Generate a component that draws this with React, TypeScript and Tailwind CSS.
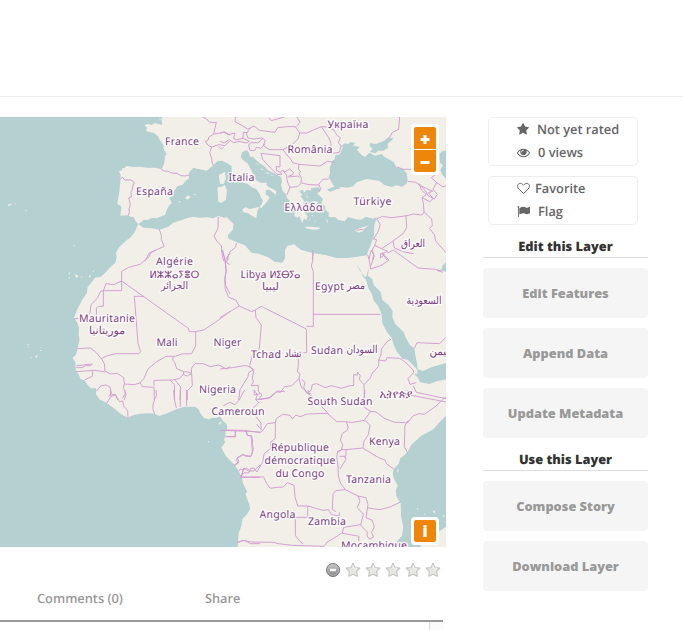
import type { ReactNode } from 'react';

const LAND = '#f2efe9';

/* Each map section is drawn at three times its displayed size. */
const SECTIONS = [
  {
    x: 0, y: 110,
    water: [
      'M0 0H480L483 20 487 45 475 42 465 39 455 45 445 42 433 46 441 53 438 63 448 66 462 69 474 79 480 91 489 102 492 120 500 132 495 137 493 158 488 172 483 177 463 173 440 173 420 170 400 171 380 168 374 174 366 175 367 181 357 183 362 195 361 215 358 245 352 281 362 287 364 294 361 317 385 316 392 321 400 320 408 335 415 342 411 350 403 368 389 384 378 392 358 410 347 430 345 453H0Z',
      'M415 342L425 335 432 329 442 330 455 324 470 325 485 318 495 315 500 300 509 284 516 280 508 265 519 248 532 229 548 224 557 212 567 206 567 188 580 173 590 176 600 178 620 182 640 166 652 154 665 152 680 160 695 168V325L655 318 640 325 620 322 600 323 580 320 565 323 545 330 520 338 505 350 478 359 455 355 430 353Z',
    ],
    land: [
      'M661 194L674 185 677 204 671 223 664 214Z',
      'M653 232L667 230 674 225 680 244 677 270 664 277 656 272Z',
      'M555 263L565 256 572 262 562 269Z M578 253L586 251 589 255Z M536 274L542 273 538 279Z',
      'M22 284L31 281 36 284 27 287Z M46 279L50 283 44 283Z M73 299L84 302 76 302Z M219 406L227 407 222 409Z M85 319L88 321Z',
      'M478 31L483 27 479 26Z',
    ],
    sea: ['M466 18L474 25 485 28 485 19Z M684 375L690 371V389L685 386Z'],
    borders: [
      'M483 177L492 183 505 184 515 189 531 190 542 197 556 198 567 195',
      'M361 207L368 202 374 210 393 210 403 217 399 226 397 238 393 247 394 261 386 264 391 283 387 297 388 307 385 316',
      'M606 20L620 27 628 36 642 38 649 37 641 72 626 82 625 90 616 94 623 105 635 111 632 120 629 128 635 145 637 160 641 166',
      'M641 72L660 69 675 66 690 76M635 111L657 104 675 107 690 92M655 110L664 117 671 112',
      'M655 321L654 355 642 378 651 394 664 408 666 431 671 453M690 431L684 438 684 450',
      'M478 358L484 376 484 389 493 409 477 416 452 428 448 439 435 452',
    ],
  },
  {
    x: 220, y: 110,
    water: [
      'M-5 152L12 155 25 161 29 181 45 202 67 217 82 221 98 233 109 237 119 252 123 263 129 271 125 283 119 291 123 295 135 282 145 270 148 261 137 254 138 241 148 239 160 248 167 255 169 244 158 237 146 231 139 225 141 218 122 218 106 209 96 185 83 160 66 148 62 140 66 127 80 120 86 126 90 140 98 140 108 149 119 160 133 168 143 180 165 191 183 201 186 215 183 225 188 243 198 253 201 264 212 275 216 286 211 292 216 304 232 302 240 308 224 307 223 318 232 323 238 318 247 340 252 325 259 331 263 318 254 308 254 298 265 303 260 292 250 285 252 271 240 257 248 257 238 243 249 239 252 248 260 239 274 242 272 235 294 232 303 238 299 246 291 250 302 260 309 267 304 278 315 288 316 301 326 307 326 321 347 322 354 330 374 334 384 321 408 328 423 329 438 320 459 326 470 321 463 348 462 375 450 411 439 435 401 442 370 444 320 435 281 429 242 419 222 403 203 407 194 421 196 440 188 456 173 456 144 441 115 431 94 428 75 406 50 397 31 388 25 374 38 360 41 342 23 325 35 311 20 315 15 324 0 319Z',
      'M326 202L330 188 329 174 337 153 344 148 345 137 360 132 369 109 361 111 374 100 384 102 392 96 405 99 400 107 419 111 411 119 424 134 435 141 448 128 465 137 485 132 494 141 521 156 529 171 548 177 560 190 563 209 560 221 546 230 529 226 515 231 493 225 479 213 439 207 410 217 399 229 384 233 365 231 345 236 340 225Z',
      'M449 126L458 117 449 108 450 99 468 102 491 93 502 85 521 83 514 92 503 101 504 113 491 122 474 122 467 130Z',
      'M320 239L339 231 365 234 350 238 331 245Z',
      'M680 122L669 122 658 133 660 158 669 166 661 179 667 195 680 207Z',
    ],
    land: [
      'M67 298L77 292 88 297 118 291 112 304 109 325 84 310 69 306Z',
      'M254 350L275 350 300 353 297 358 278 359 258 355Z',
      'M404 361L418 355 447 346 431 357 430 364 415 368Z',
      'M-4 194L8 191 16 187 16 208 9 222 0 221Z M-7 233L7 230 14 226 20 240 17 268 5 278 -5 276Z',
      'M283 272L294 276 290 283 280 280Z M296 302L306 300 303 306Z M260 257L265 260 259 263Z M276 315L280 318 275 319Z M318 325L325 335 321 338Z M283 333L287 332 287 336Z M269 326L273 330 268 332Z M257 253L262 251 260 254Z',
      'M242 283L248 286 263 296 270 304 263 302 249 293Z',
      'M110 160L120 165 109 162ZM120 174L135 181 125 179ZM135 187L151 190 141 191ZM152 195L162 196 155 197Z',
    ],
    sea: [],
    borders: [
      'M0 70L12 66 24 74 45 69 41 86 50 89 69 85 88 94 79 99 57 94 41 98 28 89 12 99 0 94',
      'M47 20L45 35 67 47 82 57 92 53 102 48 118 61 165 67 173 53 201 50 226 50 239 69 234 87 217 103 189 119 148 119 130 106 136 91 126 84 101 87 84 84 79 71 91 55M69 85L70 67 83 68M91 98L115 98 128 86M91 99L86 105 90 121 104 122 109 112 123 115 134 102M123 130L149 133 180 137 180 171 169 169 169 181 181 187 185 193 171 193 143 165 128 148 123 130M181 187L187 180 200 195 201 209 205 223 210 231 201 255M189 119L204 139 211 145 218 158 237 163 235 179 242 184 237 191 245 205 243 220 232 230 210 232M187 180L195 186 208 177 221 187 218 194 205 199M205 201L232 198 239 202M245 219L267 224 296 225 299 219 309 208 326 207M296 225L303 236 297 243M237 163L260 165 300 168 322 154 344 157M239 69L261 69 280 60 304 50 327 84 333 100 332 131 358 127 363 106 355 99 361 83 350 75 342 60 322 51 304 50M230 20L240 37 229 49M147 24L154 32 196 20',
      'M539 20L536 58 517 67 510 81 503 85M532 171L549 178 573 178M563 214L588 217 599 226M598 221L604 240 619 254 606 263 610 280 612 306 606 315 579 312 566 316 540 320 513 323 487 319 470 327M573 178L650 192 634 203 650 218 639 238 652 253 643 267 624 257 619 247 598 221M604 228L638 244 625 248 639 265M650 218L669 231 678 227M640 265L629 275 606 263M612 306L635 327 637 347 628 355 643 374 647 393 678 428M558 318L560 353 549 371 519 393 485 416 464 406 470 389 460 387 474 366 481 343 470 327M519 393L523 414 550 425 580 431M487 431L501 450M485 416L503 424 487 431M464 406L457 420 461 434 458 450',
      'M49 399L47 411 31 424 20 447M281 429L278 439 278 450',
      'M409 361L426 358 431 361',
    ],
  },
  {
    x: 0, y: 250,
    water: [
      'M0 -10H345L348 8 350 22 346 39 329 53 316 68 302 80 285 83 280 91 263 111 261 128 246 151 231 180 222 203 232 218 237 235 236 256 239 269 234 290 229 312 218 325 226 337 228 363 237 375 242 388 254 391 263 405 278 421 281 433 294 452H0Z',
    ],
    land: [
      'M207 65L210 72 206 74Z M204 83L212 82 207 86Z M226 72L236 78 229 84 226 78Z M243 79L247 79 245 84Z M266 78L273 75 269 84Z M277 66L285 58 280 66Z',
      'M80 283L88 284 85 287Z M83 290L88 291 85 294Z M121 289L124 293 123 297Z M118 300L125 300 124 304Z M108 317L112 315 111 324 105 321Z M90 322L98 322 94 324Z',
    ],
    sea: [],
    borders: [
      'M222 206L240 206M290 204L289 174 296 169 310 169 310 122 365 122 365 64 386 52 420 43 439 27 448 9 468 0M310 122L302 124 292 145 273 164 270 189 248 218M310 122L318 101 341 104 365 93 565 235 568 245 587 245 611 240 647 216 690 185M432 139H403L414 280 422 305 417 311 349 311 322 317 304 326 290 309 271 294 232 296M587 245V287L575 311 545 312 526 319 498 319 467 337 444 357 432 385 420 399 403 404 373 402 371 383 352 370 331 372 315 363 313 341 304 326M228 353L247 353 256 347 271 347 277 342 251 345 230 347M228 365L285 361 315 366M255 389L277 379 278 364M289 424L302 408 318 405 330 411 334 430 326 440M334 434L346 433 353 450M373 402L370 413 378 432 373 450M420 399L428 410 462 412 463 450M462 407V391L517 390 537 386 550 374 551 365 530 356 524 337 518 330 520 320M511 391L523 404 524 449M526 391L542 411 540 450M550 374L562 378 574 371 562 365 551 366M574 371L575 354 585 341 610 341 631 350 656 345 680 357 690 349M575 371L577 407 562 422 562 450M668 0L674 27 679 62 675 80 677 107 690 132M690 11L682 20 680 38 690 44',
    ],
  },
  {
    x: 220, y: 250,
    water: [
      'M404 21L409 43 422 61 429 81 437 87 445 114 456 133 461 152 473 166 485 191 487 219 500 245 515 263 521 284 529 302 547 326 563 329 577 343 592 360 593 370 582 373 594 383 600 397 628 402 653 393 690 386V336L636 351 609 363 593 358 591 340 587 321 583 295 569 284 556 260 551 247 525 221 517 201 518 183 505 164 487 150 482 126 461 105 457 87 444 77 447 51 440 76 436 82 421 64 409 43Z',
      'M678 37L668 46 664 61 678 66Z',
      'M115 -8L118 10 145 22 164 35 186 38 195 25V-8Z M249 0L275 8 318 15 349 24 380 24 399 21 440 16 445 -5H250Z',
    ],
    land: [],
    sea: [],
    borders: [
      'M5 0L16 30 18 65 14 94 16 119 26 142 47 150 58 168 95 185 106 180 124 169 259 237 260 308 250 308M278 0V32L274 48 280 65V229H259M280 193H482M58 168L0 203M106 180L108 203 124 225 118 295 97 316 89 347 99 360 86 368 84 380 60 419 56 450M0 357L37 353 71 347 83 348 102 360 97 384 100 396 93 407 115 406 115 424 126 434 116 449M119 449L147 444 169 425 181 427 194 410 215 407 237 386 240 371 232 365 235 347 235 309 247 308M237 386L243 410 263 429 273 421 277 404 290 401 315 413 334 407 364 415 386 408 401 406 401 374 412 375 412 366 421 377 418 388 432 404 434 449M432 404L451 384 457 369 476 349 476 330 483 315 484 297 502 274 513 268M474 330L497 333 501 323 539 325 559 339 580 361 581 368 564 386 570 403 589 398M580 408L589 427 678 446M482 10L481 24 493 15 487 7M482 10L502 24 506 31 484 46 452 57 447 27 454 0M454 0L463 19 452 48M447 27L443 14M503 9L520 0 594 54 647 58 669 67M583 295L591 278 614 279 659 281 678 262M246 388L255 398 251 412 260 429 273 431',
      'M652 60L655 64 666 59',
    ],
  },
  {
    x: 60, y: 390,
    water: [
      'M-182 0L108 -5 108 13 120 29 135 36 150 46 167 59 183 72 204 83 219 76 239 71 270 70 285 72 298 78 321 70 349 58 371 51 405 50 415 57 421 70 431 83 445 88 455 84 470 83 480 79 486 88 490 94 500 102 502 114 497 123 496 139 492 151 496 154 491 164 484 172 488 181 498 199 512 213 524 224 537 245 546 264 549 280 562 305 557 310 559 321 568 342 570 357 561 373 547 388 544 408 536 430 533 472H-182Z',
    ],
    land: ['M476 100L484 94 482 102 478 104Z M443 154L447 153 446 158Z M459 130L460 131Z M86 294L89 296Z M235 434V436Z'],
    sea: [],
    borders: [
      'M139 41L153 19 151 0M153 19L166 15 173 25 178 35 188 33 192 49 203 62 204 83M188 25L196 10 194 0M288 0L290 16 284 27 279 45 279 59 284 72M341 0L343 28 349 54M361 0V51M379 0L380 49M489 48L509 37 525 44 537 31 554 0',
      'M498 120L547 121 600 127M526 122V140H497M556 122L563 137 573 136 575 154 577 184 573 199 558 199 549 194 533 204 529 211 536 219 524 226M537 243L541 237 550 240 560 234 570 243 581 243 600 225M549 241L546 253 541 262H600M533 457L554 451 571 461 600 461M582 0L583 15 600 11M590 102L600 115',
    ],
  },
  {
    x: 220, y: 390,
    water: [
      'M695 60L662 93 640 118 604 137 574 164 562 187 551 197 541 205 536 222 522 236 518 250 522 268 533 286 527 303 530 321 542 340 543 379 550 411 546 437 532 453 520 474H598L615 448 695 425Z',
    ],
    land: [
      'M518 268L522 271 520 279Z M531 240L536 236 534 249Z M591 353L596 357 592 359Z M612 370L617 374 612 374Z M639 364L643 360 646 368 642 370Z M667 374L674 378 671 382Z M655 425L678 410V474H602L618 452Z',
    ],
    sea: [],
    borders: [
      'M65 261H131L140 281 151 295 172 292 190 291 202 278 222 286 225 320 233 348H263L288 355 309 361 326 359 334 374 358 378 358 367M263 348V382H226V436L240 455 249 461M52 458L68 451 95 456 161 457 174 461 218 466 312 469 322 456 343 444 367 428',
      'M166 98L169 86 188 73 210 76 218 87 228 75 240 80 263 72 322 70 350 95 379 95 384 111 382 121 367 130 361 151 368 164 364 180 353 184 350 202 354 226 355 257 361 279 376 299 347 302 339 312 337 358 348 365M379 95L394 98 433 91 452 64 434 53 431 34 435 0M452 64L468 66 495 86 525 97 556 98 567 93 555 105 553 170 562 187M567 93L579 78 597 71 613 73 646 50 678 20M435 91L450 106 445 134 432 153 429 174 378 179 366 178 354 187M358 199L375 199 378 208 360 237M378 179L378 195 373 203M429 175L476 203 495 210 500 222 521 237M376 299L414 318 438 323 444 344 438 383 457 391 463 411 455 427 461 441 450 447 441 439 442 426 422 406 430 373 412 352 420 333 414 318M444 354L480 359 510 351 542 336M422 404L371 412 367 430 392 434 417 439 416 454',
      'M0 121L90 124 123 127 130 119 142 101 166 98 166 145 151 157 153 174 132 192 128 218 123 224 111 246 101 234 92 235 86 249 72 248 63 260M46 122V140H17M79 122L82 136 95 138 98 153 96 162 100 175 97 190 91 199 68 194 51 204 57 215 43 225M63 261L72 234 86 244M102 0L112 14 107 29 116 38 97 57 108 80 123 99 123 121M107 29L151 23 173 3 195 5M265 0L263 10 277 20 324 70M560 0L570 15 678 36',
    ],
  },
];

type Label = { t: string; x: number; y: number; w: number; s?: number };
const LABELS: Label[] = [
  { t: 'Україна', x: 348, y: 127.5, w: 41 },
  { t: 'France', x: 182, y: 145, w: 34 },
  { t: 'România', x: 310, y: 153, w: 45 },
  { t: 'Italia', x: 241.5, y: 181, w: 26 },
  { t: 'España', x: 154.5, y: 195, w: 37 },
  { t: 'Ελλάδα', x: 303.5, y: 211, w: 38 },
  { t: 'Türkiye', x: 372.5, y: 205, w: 38 },
  { t: 'العراق', x: 413, y: 247, w: 24, s: 11 },
  { t: 'Algérie', x: 174.5, y: 265, w: 37 },
  { t: 'ⵍⵣⵣⴰⵢⴻⵔ', x: 174.5, y: 277.5, w: 50, s: 10 },
  { t: 'الجزائر', x: 174.5, y: 289, w: 27, s: 10.5 },
  { t: 'Libya', x: 253.5, y: 278, w: 26 },
  { t: 'ⵍⵉⴱⵢⴰ', x: 285, y: 277.5, w: 31, s: 10 },
  { t: 'ليبيا', x: 270.5, y: 290, w: 17, s: 10.5 },
  { t: 'Egypt', x: 329.5, y: 290, w: 29 },
  { t: 'مصر', x: 356, y: 289, w: 18, s: 11 },
  { t: 'السعودية', x: 424, y: 304, w: 35, s: 11 },
  { t: 'Mauritanie', x: 107, y: 322, w: 56 },
  { t: 'موريتانيا', x: 107, y: 334, w: 36, s: 11 },
  { t: 'Mali', x: 167, y: 346, w: 21 },
  { t: 'Niger', x: 227.5, y: 346, w: 28 },
  { t: 'Tchad', x: 266, y: 358, w: 30 },
  { t: 'تشاد', x: 293, y: 357, w: 17, s: 11 },
  { t: 'Sudan', x: 327, y: 354, w: 32 },
  { t: 'السودان', x: 362, y: 353, w: 31, s: 11 },
  { t: 'اليمن', x: 441, y: 355, w: 23, s: 11 },
  { t: 'Nigeria', x: 217.5, y: 393, w: 37 },
  { t: 'ኢትዮጵያ', x: 396, y: 398, w: 33, s: 11.5 },
  { t: 'South Sudan', x: 340, y: 405, w: 65 },
  { t: 'Cameroun', x: 238, y: 415, w: 53 },
  { t: 'Kenya', x: 384.5, y: 445, w: 31 },
  { t: 'République', x: 300, y: 451, w: 58 },
  { t: 'démocratique', x: 300, y: 464, w: 71 },
  { t: 'du Congo', x: 300, y: 476.5, w: 49 },
  { t: 'Tanzania', x: 368.5, y: 483, w: 45 },
  { t: 'Angola', x: 277.5, y: 518, w: 36 },
  { t: 'Zambia', x: 327, y: 525, w: 38 },
  { t: 'Moçambique', x: 374, y: 549, w: 66 },
];

function LayerMap() {
  const at = (x: number, y: number) => `translate(${x} ${y}) scale(.333333)`;
  return (
    <svg className="block h-[430px] w-[446px]" viewBox="0 117 446 430">
      <rect y="117" width="446" height="430" fill={LAND} />
      {SECTIONS.map((s, i) => (
        <g key={i} transform={at(s.x, s.y)} fill="#b5d0d0">
          {s.water.concat(s.sea).map((d) => <path key={d} d={d} />)}
        </g>
      ))}
      {SECTIONS.map((s, i) => (
        <g key={i} transform={at(s.x, s.y)}>
          {s.land.map((d) => <path key={d} d={d} fill={LAND} />)}
          {s.borders.map((d) => (
            <path key={d} d={d} fill="none" stroke="#d29bd0" strokeWidth="2.8" strokeLinejoin="round" />
          ))}
        </g>
      ))}
      <g
        className="font-['Noto_Sans','DejaVu_Sans',sans-serif]"
        fill="#7b427f" stroke="#fffcfd" strokeOpacity=".85" strokeWidth="3" strokeLinejoin="round" paintOrder="stroke"
      >
        {LABELS.map((l) => (
          <text key={l.t} x={l.x} y={l.y} fontSize={l.s ?? 10.6} textAnchor="middle" textLength={l.w}
            lengthAdjust={/[\u0600-\u06ff]/.test(l.t) ? 'spacingAndGlyphs' : 'spacing'}>{l.t}</text>
        ))}
      </g>
    </svg>
  );
}

function ZoomSign({ plus }: { plus?: boolean }) {
  return (
    <svg className="size-[22px]" viewBox="0 0 22 22" stroke="#fff" strokeWidth="3">
      <path d="M6.5 12.5H15.5" />
      {plus && <path d="M11 8V17" />}
    </svg>
  );
}

function RatingStar() {
  return (
    <svg className="size-4" viewBox="0 0 16 16">
      <path d="M8 1.3 10 5.5 14.9 6.1 11.6 9.4 12.4 14.3 8 12.2 3.6 14.3 4.4 9.4 1.1 6.1 6 5.5Z"
        fill="#e5e7e3" stroke="#c5c5c5" strokeWidth="1.1" strokeLinejoin="round" />
      <path d="M8 3.5 9.2 6.7 12 7.2" fill="none" stroke="#f6f7f5" />
    </svg>
  );
}

function CancelRating() {
  return (
    <svg className="size-4" viewBox="0 0 16 16">
      <defs>
        <linearGradient id="cancel" x2="0" y2="1"><stop stopColor="#c8c8c8" /><stop offset="1" stopColor="#858585" /></linearGradient>
      </defs>
      <circle cx="8" cy="8" r="6.5" fill="url(#cancel)" stroke="#777" />
      <circle cx="8" cy="8" r="5.3" fill="none" stroke="#bbb" strokeWidth=".7" />
      <path d="M5 8H11" stroke="#fff" strokeWidth="2.4" />
    </svg>
  );
}

const ICONS = {
  star: 'M1664 615q0 22-26 48l-363 354 86 500q1 7 1 20 0 21-10.5 35.5t-30.5 14.5q-19 0-40-12l-449-236-449 236q-22 12-40 12-21 0-31.5-14.5t-10.5-35.5q0-6 2-20l86-500-364-354q-25-27-25-48 0-37 56-46l502-73 225-455q19-41 49-41t49 41l225 455 502 73q56 9 56 46z',
  eye: 'M1664 960q-152-236-381-353 61 104 61 225 0 185-131.5 316.5t-316.5 131.5-316.5-131.5-131.5-316.5q0-121 61-225-229 117-381 353 133 205 333.5 326.5t434.5 121.5 434.5-121.5 333.5-326.5zm-720-384q0-20-14-34t-34-14q-125 0-214.5 89.5t-89.5 214.5q0 20 14 34t34 14 34-14 14-34q0-86 61-147t147-61q20 0 34-14t14-34zm848 384q0 34-20 69-140 230-376.5 368.5t-499.5 138.5-499.5-139-376.5-368q-20-35-20-69t20-69q140-229 376.5-368t499.5-139 499.5 139 376.5 368q20 35 20 69z',
  flag: 'M320 256q0 72-64 110v1266q0 13-9.5 22.5t-22.5 9.5h-64q-13 0-22.5-9.5t-9.5-22.5v-1266q-64-38-64-110 0-53 37.5-90.5t90.5-37.5 90.5 37.5 37.5 90.5zm1472 64v763q0 25-12.5 38.5t-39.5 27.5q-215 116-369 116-61 0-123.5-22t-108.5-48-115.5-48-142.5-22q-192 0-464 146-17 9-33 9-26 0-45-19t-19-45v-742q0-32 31-55 21-14 79-43 236-120 421-120 107 0 200 29t219 88q38 19 88 19 54 0 117.5-21t110-47 88-47 54.5-21q26 0 45 19t19 45z',
};

function Icon({ name }: { name: keyof typeof ICONS }) {
  return (
    <svg className={name === 'star' ? 'mr-[7px] size-[13px]' : 'mr-2 size-[13px]'} viewBox="0 0 1792 1792" fill="currentColor">
      <path d={ICONS[name]} />
    </svg>
  );
}

function HeartOutline() {
  return (
    <svg className="mr-[5px] size-[13px]" viewBox="0 0 13 13" fill="none" stroke="currentColor" strokeLinejoin="round">
      <path d="M6.5 11.5 1.8 7C.4 5.6.2 3.7 1.1 2.4 2.3 .8 4.9 1 6.5 3.3 8.1 1 10.7.8 11.9 2.4 12.8 3.7 12.6 5.6 11.2 7Z" />
    </svg>
  );
}

function Panel({ children }: { children: ReactNode }) {
  return <div className="mr-[10px] mb-[10px] ml-[5px] h-[49px] rounded-[5px] border border-[#eee] pl-7 text-[12.8px] leading-[23px] font-semibold text-[#666]">{children}</div>;
}

function Heading({ children }: { children: ReactNode }) {
  return <h4 className="mb-[10px] h-[23px] border-b border-[#ddd] text-center text-[12.8px] leading-[22px] font-extrabold text-[#333]">{children}</h4>;
}

function Action({ children }: { children: ReactNode }) {
  return <button className="mb-[10px] block h-[50px] w-full rounded bg-[#f5f5f5] pt-px text-[12.8px] font-extrabold text-[#999]">{children}</button>;
}

export default function App() {
  return (
    <div className="h-[630px] w-[683px] overflow-hidden bg-white font-['Open_Sans',sans-serif] antialiased [text-rendering:geometricPrecision]">
      <header className="h-[97px] border-b border-[#eee]" />
      <div className="flex pt-5">
        <main className="w-[446px] shrink-0">
          <div className="relative">
            <LayerMap />
            <div className="absolute top-[7px] left-[411px] flex w-7 flex-col gap-px rounded bg-white p-[3px]">
              <button className="h-[22px] w-[22px] rounded-t-[2px] bg-[#ee8609]"><ZoomSign plus /></button>
              <button className="h-[22px] w-[22px] rounded-b-[2px] bg-[#ee8609]"><ZoomSign /></button>
            </div>
            <div className="absolute top-[400px] left-[411px] rounded bg-white p-[3px]">
              <button className="block size-[22px] rounded-[2px] bg-[#ee8609] text-center text-[16px] leading-[22px] font-extrabold text-white">i</button>
            </div>
          </div>
          <div className="flex h-[41px] gap-1 pt-[15px] pl-[325px]">
            <CancelRating />
            <RatingStar /><RatingStar /><RatingStar /><RatingStar /><RatingStar />
          </div>
          <nav className="flex h-[34px] w-[443px] gap-[82px] border-b-2 border-[#999] pl-[37px] text-[12.8px] leading-5 font-semibold text-[#999]">
            <span>Comments (0)</span>
            <span>Share</span>
          </nav>
          <div className="flex w-[443px] justify-end"><div className="h-2 w-[14px] border-l border-[#ddd] bg-[#fafafa]" /></div>
        </main>
        <aside className="ml-[37px] w-[165px]">
          <Panel>
            <div className="flex items-center"><Icon name="star" />Not yet rated</div>
            <div className="flex items-center"><Icon name="eye" />0 views</div>
          </Panel>
          <Panel>
            <div className="flex items-center"><HeartOutline />Favorite</div>
            <div className="flex items-center"><Icon name="flag" />Flag</div>
          </Panel>
          <Heading>Edit this Layer</Heading>
          <Action>Edit Features</Action>
          <Action>Append Data</Action>
          <Action>Update Metadata</Action>
          <Heading>Use this Layer</Heading>
          <Action>Compose Story</Action>
          <Action>Download Layer</Action>
        </aside>
      </div>
    </div>
  );
}
